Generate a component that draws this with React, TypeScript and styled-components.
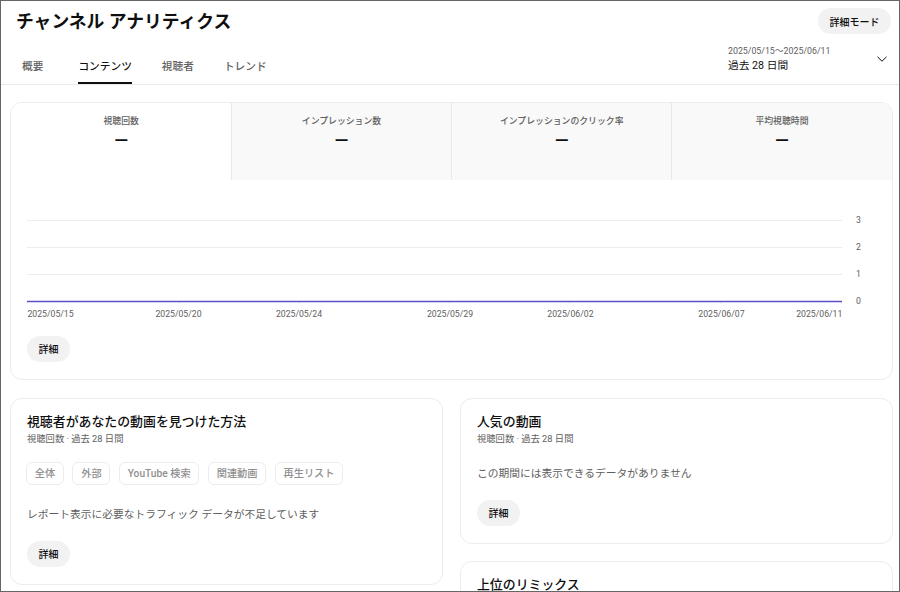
import React from "react";
import styled, { createGlobalStyle } from "styled-components";

const FONT = `Roboto, "Noto Sans CJK JP", "Noto Sans", sans-serif`;

const Global = createGlobalStyle`
  html, body { margin: 0; padding: 0; background: #fff; }
  body { font-family: ${FONT}; overflow: hidden; }
  * { box-sizing: border-box; }
`;

const Frame = styled.div`
  width: 900px;
  height: 592px;
  border: 1px solid #666;
  overflow: hidden;
  background: #fff;
  display: flex;
  flex-direction: column;
`;

const Header = styled.header`
  height: 84px;
  flex: none;
  border-bottom: 1px solid #e9e9e9;
  display: flex;
  flex-direction: column;
  padding: 7px 8px 0 15px;
`;

const TitleRow = styled.div`
  display: flex;
  justify-content: space-between;
  align-items: flex-start;
  height: 40px;
`;

const Title = styled.h1`
  margin: 0;
  font-size: 17.8px;
  line-height: 28px;
  font-weight: 700;
  color: #0f0f0f;
`;

const Pill = styled.button`
  border: 0;
  background: #f2f2f2;
  border-radius: 13px;
  height: 26px;
  padding: 0 11.5px;
  font-family: ${FONT};
  font-size: 10px;
  font-weight: 500;
  color: #0f0f0f;
  flex: none;
`;

const NavRow = styled.div`
  flex: 1;
  display: flex;
  justify-content: space-between;
`;

const Tabs = styled.nav`
  display: flex;
  gap: 30px;
  padding-left: 6px;
`;

const Tab = styled.div<{ $active?: boolean; $extra?: number }>`
  height: 36px;
  padding-top: 11px;
  margin-right: ${(p) => p.$extra ?? 0}px;
  font-size: 10.7px;
  line-height: 16px;
  font-weight: 500;
  color: ${(p) => (p.$active ? "#0f0f0f" : "#606060")};
  border-bottom: 2px solid ${(p) => (p.$active ? "#0f0f0f" : "transparent")};
`;

const DateBox = styled.div`
  width: 160px;
  margin-right: 3px;
  margin-top: -4px;
  display: flex;
  justify-content: space-between;
  align-items: center;
  height: 28px;
`;

const DateText = styled.div`
  display: flex;
  flex-direction: column;
`;

const DateRange = styled.span`
  font-size: 8.8px;
  line-height: 13px;
  margin-top: 1px;
  color: #606060;
`;

const DateLabel = styled.span`
  font-size: 10.7px;
  line-height: 15px;
  color: #0f0f0f;
`;

const Chevron = styled.svg`
  margin-top: 2px;
  flex: none;
`;

const Main = styled.main`
  flex: 1;
  padding: 16.7px 6.4px 0 8.6px;
  display: flex;
  flex-direction: column;
  gap: 18px;
`;

const Card = styled.section`
  border: 1px solid #ececec;
  border-radius: 12px;
  background: #fff;
  overflow: hidden;
`;

const MetricCard = styled(Card)`
  height: 278px;
  flex: none;
`;

const Metrics = styled.div`
  display: grid;
  grid-template-columns: repeat(4, 1fr);
  height: 77px;
`;

const Metric = styled.div<{ $active?: boolean }>`
  background: ${(p) => (p.$active ? "#fff" : "#f9f9f9")};
  border-left: 1px solid ${(p) => (p.$active ? "transparent" : "#e8e8e8")};
  text-align: center;
  padding-top: 11px;
`;

const MetricLabel = styled.div`
  font-size: 8.85px;
  line-height: 14px;
  font-weight: 500;
  color: #606060;
`;

const MetricValue = styled.div`
  font-size: 18px;
  line-height: 24px;
  margin-top: 1px;
  font-weight: 500;
  color: #0f0f0f;
`;

const Chart = styled.svg`
  display: block;
  width: 880px;
  height: 148px;
  text {
    font-family: ${FONT};
    font-size: 8.7px;
    fill: #606060;
  }
`;

const CardButton = styled(Pill)`
  display: block;
`;

const ChartFooter = styled.div`
  padding: 8px 16.4px 0;
`;

const Columns = styled.div`
  display: grid;
  grid-template-columns: 433px 433px;
  gap: 17px;
  align-items: start;
`;

const Column = styled.div`
  display: flex;
  flex-direction: column;
  gap: 17px;
`;

const PanelCard = styled(Card)`
  padding: 13px 16px 17px 16.4px;
`;

const PanelTitle = styled.h2`
  margin: 0;
  font-size: 12.9px;
  line-height: 20px;
  font-weight: 500;
  color: #0f0f0f;
`;

const PanelSub = styled.div`
  font-size: 9.3px;
  line-height: 14px;
  color: #606060;
`;

const Chips = styled.div`
  display: flex;
  gap: 8.5px;
  margin-top: 16px;
  margin-left: -1px;
`;

const Chip = styled.span`
  height: 23px;
  border: 1px solid #ececec;
  border-radius: 6px;
  padding: 0 7.8px;
  font-size: 10.2px;
  line-height: 21px;
  font-weight: 500;
  color: #909090;
`;

const Note = styled.p<{ $top: number; $bottom: number }>`
  margin: ${(p) => p.$top}px 0 ${(p) => p.$bottom}px;
  font-size: 10.75px;
  line-height: 16px;
  color: #606060;
`;

const xLabels = [
  { x: 16.4, t: "2025/05/15", a: "start", tick: 16 },
  { x: 167.5, t: "2025/05/20", a: "middle", tick: 168 },
  { x: 288, t: "2025/05/24", a: "middle", tick: 288 },
  { x: 439, t: "2025/05/29", a: "middle", tick: 439 },
  { x: 559.4, t: "2025/06/02", a: "middle", tick: 559 },
  { x: 710.4, t: "2025/06/07", a: "middle", tick: 710 },
  { x: 831.4, t: "2025/06/11", a: "end", tick: 830 },
];

const DETAIL = "詳細";
const SUB = "視聴回数 · 過去 28 日間";

export default function App() {
  return (
    <>
      <Global />
      <Frame>
        <Header>
          <TitleRow>
            <Title>チャンネル アナリティクス</Title>
            <Pill>詳細モード</Pill>
          </TitleRow>
          <NavRow>
            <Tabs>
              <Tab $extra={5}>概要</Tab>
              <Tab $active>コンテンツ</Tab>
              <Tab>視聴者</Tab>
              <Tab>トレンド</Tab>
            </Tabs>
            <DateBox>
              <DateText>
                <DateRange>2025/05/15～2025/06/11</DateRange>
                <DateLabel>過去 28 日間</DateLabel>
              </DateText>
              <Chevron width="12" height="12" viewBox="0 0 12 12" fill="none" stroke="#0f0f0f" strokeWidth="1">
                <path d="M1.5 3.8 6 8.2l4.5-4.4" />
              </Chevron>
            </DateBox>
          </NavRow>
        </Header>
        <Main>
          <MetricCard>
            <Metrics>
              <Metric $active>
                <MetricLabel>視聴回数</MetricLabel>
                <MetricValue>—</MetricValue>
              </Metric>
              <Metric>
                <MetricLabel>インプレッション数</MetricLabel>
                <MetricValue>—</MetricValue>
              </Metric>
              <Metric>
                <MetricLabel>インプレッションのクリック率</MetricLabel>
                <MetricValue>—</MetricValue>
              </Metric>
              <Metric>
                <MetricLabel>平均視聴時間</MetricLabel>
                <MetricValue>—</MetricValue>
              </Metric>
            </Metrics>
            <Chart viewBox="0 0 880 148">
              {[40.5, 67.5, 94.5].map((y) => (
                <line key={y} x1="16" x2="831" y1={y} y2={y} stroke="#ececec" />
              ))}
              {xLabels.map((l) => (
                <line key={l.tick} x1={l.tick} x2={l.tick} y1="121" y2="124" stroke="#efefef" />
              ))}
              <line x1="16" x2="831" y1="121.5" y2="121.5" stroke="#5b50c8" strokeWidth="1.4" />
              {[3, 2, 1, 0].map((v, i) => (
                <text key={v} x="845" y={43 + i * 27}>
                  {v}
                </text>
              ))}
              {xLabels.map((l) => (
                <text key={l.t} x={l.x} y="136.5" textAnchor={l.a as "start" | "middle" | "end"}>
                  {l.t}
                </text>
              ))}
            </Chart>
            <ChartFooter>
              <CardButton>{DETAIL}</CardButton>
            </ChartFooter>
          </MetricCard>
          <Columns>
            <PanelCard>
              <PanelTitle>視聴者があなたの動画を見つけた方法</PanelTitle>
              <PanelSub>{SUB}</PanelSub>
              <Chips>
                <Chip>全体</Chip>
                <Chip>外部</Chip>
                <Chip>YouTube 検索</Chip>
                <Chip>関連動画</Chip>
                <Chip>再生リスト</Chip>
              </Chips>
              <Note $top={22} $bottom={18}>レポート表示に必要なトラフィック データが不足しています</Note>
              <CardButton>{DETAIL}</CardButton>
            </PanelCard>
            <Column>
              <PanelCard>
                <PanelTitle>人気の動画</PanelTitle>
                <PanelSub>{SUB}</PanelSub>
                <Note $top={20} $bottom={18}>この期間には表示できるデータがありません</Note>
                <CardButton>{DETAIL}</CardButton>
              </PanelCard>
              <PanelCard>
                <PanelTitle>上位のリミックス</PanelTitle>
              </PanelCard>
            </Column>
          </Columns>
        </Main>
      </Frame>
    </>
  );
}
